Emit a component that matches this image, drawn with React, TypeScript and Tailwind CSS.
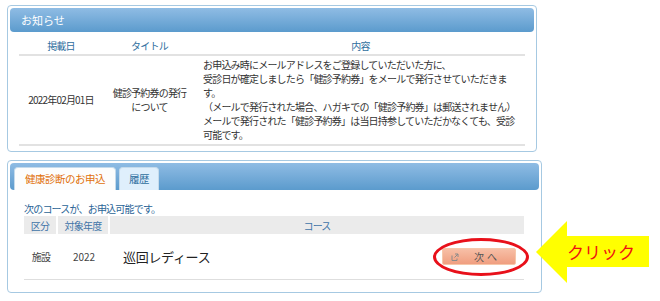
import React from "react";

const font = "font-['Noto_Sans_CJK_JP','Noto_Sans',sans-serif]";

const noticeLines = [
  "お申込み時にメールアドレスをご登録していただいた方に、",
  "受診日が確定しましたら「健診予約券」をメールで発行させていただきま",
  "す。",
  "（メールで発行された場合、ハガキでの「健診予約券」は郵送されません）",
  "メールで発行された「健診予約券」は当日持参していただかなくても、受診",
  "可能です。",
];

function NoticePanel() {
  return (
    <div className="h-[147px] w-[530px] rounded-[4px] border border-[#a6c9e2] bg-white p-[2px]">
      {/* ── Header ─────────────────────────── */}
      <div className="flex h-[24px] items-center rounded-[4px] bg-gradient-to-b from-[#8fbce4] to-[#5b9bcd] pl-[11px] text-[11px] text-white">
        お知らせ
      </div>

      {/* ── Table ──────────────────────────── */}
      <div className="mx-[9px] mt-[4px] text-[10px] tracking-[-0.8px]">
        <div className="grid h-[20px] grid-cols-[84px_93px_1fr] items-center border-b-2 border-[#e2e2e2] text-center text-[#2e6e9e]">
          <div>掲載日</div>
          <div>タイトル</div>
          <div>内容</div>
        </div>
        <div className="grid h-[90px] grid-cols-[84px_93px_1fr] items-center border-b-2 border-[#e2e2e2] leading-[14px] text-[#333]">
          <div className="text-center">2022年02月01日</div>
          <div className="text-center">
            健診予約券の発行
            <br />
            について
          </div>
          <div className="pl-[7px]">
            {noticeLines.map((line) => (
              <div key={line} className="whitespace-nowrap">
                {line}
              </div>
            ))}
          </div>
        </div>
      </div>
    </div>
  );
}

function ApplyPanel() {
  return (
    <div className="mt-[8px] h-[133px] w-[535px] rounded-[4px] border border-[#a6c9e2] bg-white p-[2px]">
      {/* ── Tabs ───────────────────────────── */}
      <div className="flex h-[27px] items-end gap-[3px] rounded-[4px] bg-gradient-to-b from-[#8fbce4] to-[#5b9bcd] pl-[4px] text-[10.5px] tracking-[-0.5px]">
        <div className="flex h-[23px] w-[102px] items-center justify-center rounded-t-[4px] border border-b-0 border-[#c5dbec] bg-[#fcfdfd] text-[#e17009]">
          健康診断のお申込
        </div>
        <div className="flex h-[23px] w-[40px] items-center justify-center rounded-t-[4px] border border-b-0 border-[#c5dbec] bg-[#dfeffc] text-[#2e6e9e]">
          履歴
        </div>
      </div>

      {/* ── Body ───────────────────────────── */}
      <div className="ml-[14px] mr-[15px] text-[10px] tracking-[-0.8px]">
        <div className="mt-[12px] h-[14px] leading-[14px] text-[#2a6496]">
          次のコースが、お申込可能です。
        </div>
        <div className="grid h-[18px] grid-cols-[34px_52px_1fr] text-center text-[#3f74a8]">
          <div className="flex items-center justify-center border-r-2 border-white bg-[#ebebeb]">区分</div>
          <div className="flex items-center justify-center border-r-2 border-white bg-[#ebebeb]">対象年度</div>
          <div className="flex items-center justify-center bg-[#ebebeb]">コース</div>
        </div>
        <div className="grid h-[46px] grid-cols-[34px_52px_1fr] items-center border-b border-[#dedede] text-[#444]">
          <div className="text-center">施設</div>
          <div className="text-center tracking-normal">2022</div>
          <div className="flex items-center justify-between pl-[13px] pr-[8px]">
            <span className="text-[13px] tracking-[-0.3px] text-[#222]">巡回レディース</span>
            <button className="flex h-[17px] w-[74px] items-center rounded-[2px] border border-[#f6c7aa] bg-gradient-to-b from-[#f7bfa6] to-[#f09e80] pl-[8px] text-[10px] text-[#555]">
              <svg width="8" height="8" viewBox="0 0 8 8" fill="none" stroke="#8a8a8a" strokeWidth="1">
                <path d="M1 2.5v5h5V5.5" />
                <path d="M4 1h3v3M7 1 3.5 4.5" />
              </svg>
              <span className="ml-[15px] tracking-[3px]">次へ</span>
            </button>
          </div>
        </div>
      </div>
    </div>
  );
}

export default function App() {
  return (
    <div className={`relative h-[301px] w-[660px] overflow-hidden bg-white ${font}`}>
      <div className="pl-[7px] pt-[5px]">
        <NoticePanel />
        <ApplyPanel />
      </div>

      {/* ── Callout overlay ──────────────────── */}
      <div className="absolute left-[433px] top-[238px] h-[38px] w-[96px] rounded-[50%] border-[3.5px] border-[#e8101a]" />
      <svg className="absolute left-[536px] top-[221px]" width="114" height="63" viewBox="0 0 114 63">
        <polygon points="0,31 31,0 31,15 113,15 113,46 31,46 31,62" fill="#ffff00" />
      </svg>
      <div className="absolute left-[567px] top-[240px] text-[17px] leading-[24px] text-[#ee1111]">
        クリック
      </div>
    </div>
  );
}
